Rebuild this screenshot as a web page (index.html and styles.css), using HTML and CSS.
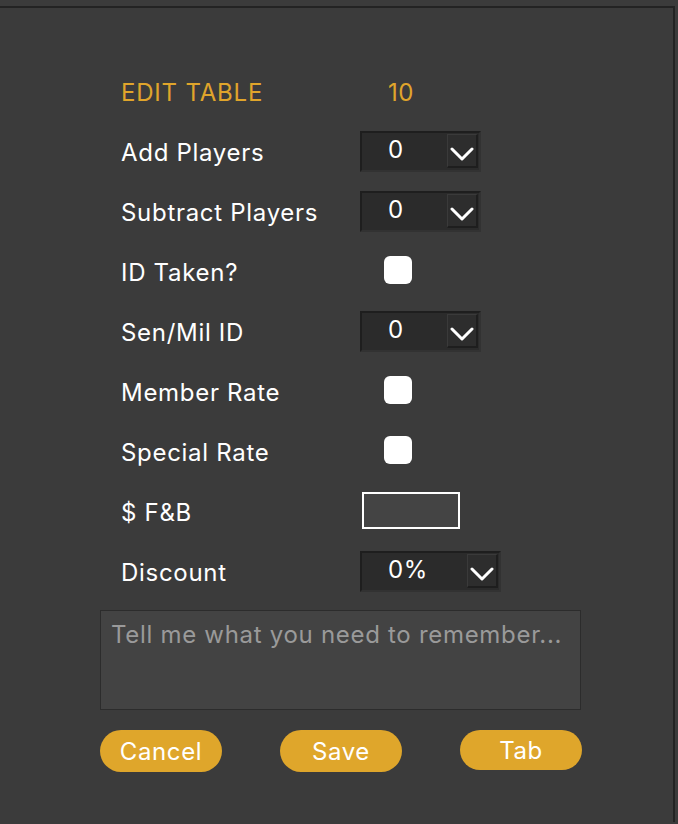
FILE: index.html
```html
<!DOCTYPE html>
<html>
<head>
<meta charset="utf-8">
<link rel="stylesheet" href="styles.css">
</head>
<body>
<div class="frame">
  <div class="form">
    <div class="row">
      <div class="title">EDIT TABLE</div>
      <div class="title num">10</div>
    </div>
    <div class="row">
      <div class="label">Add Players</div>
      <div class="select"><span class="val">0</span><span class="btn"><svg width="24" height="14" viewBox="0 0 24 14"><path d="M2 2 L12 12 L22 2" fill="none" stroke="#fff" stroke-width="3" stroke-linecap="round" stroke-linejoin="round"/></svg></span></div>
    </div>
    <div class="row">
      <div class="label">Subtract Players</div>
      <div class="select"><span class="val">0</span><span class="btn"><svg width="24" height="14" viewBox="0 0 24 14"><path d="M2 2 L12 12 L22 2" fill="none" stroke="#fff" stroke-width="3" stroke-linecap="round" stroke-linejoin="round"/></svg></span></div>
    </div>
    <div class="row">
      <div class="label">ID Taken?</div>
      <div class="check"></div>
    </div>
    <div class="row">
      <div class="label">Sen/Mil ID</div>
      <div class="select"><span class="val">0</span><span class="btn"><svg width="24" height="14" viewBox="0 0 24 14"><path d="M2 2 L12 12 L22 2" fill="none" stroke="#fff" stroke-width="3" stroke-linecap="round" stroke-linejoin="round"/></svg></span></div>
    </div>
    <div class="row">
      <div class="label">Member Rate</div>
      <div class="check"></div>
    </div>
    <div class="row">
      <div class="label">Special Rate</div>
      <div class="check"></div>
    </div>
    <div class="row">
      <div class="label">$ F&amp;B</div>
      <div class="input"></div>
    </div>
    <div class="row">
      <div class="label">Discount</div>
      <div class="select wide"><span class="val">0%</span><span class="btn"><svg width="24" height="14" viewBox="0 0 24 14"><path d="M2 2 L12 12 L22 2" fill="none" stroke="#fff" stroke-width="3" stroke-linecap="round" stroke-linejoin="round"/></svg></span></div>
    </div>
  </div>
  <div class="notes">Tell me what you need to remember...</div>
  <div class="actions">
    <div class="pill">Cancel</div>
    <div class="pill">Save</div>
    <div class="pill short">Tab</div>
  </div>
</div>
</body>
</html>
```

FILE: styles.css
```css
html, body {
  margin: 0;
  padding: 0;
  background: #3b3b3b;
  font-family: Inter, "Liberation Sans", sans-serif;
}
.frame {
  margin-top: 6px;
  width: 675px;
  height: 816px;
  box-sizing: border-box;
  border-top: 2px solid #232323;
  border-right: 2px solid #232323;
}
.form {
  padding: 54px 0 0 121px;
}
.row {
  display: grid;
  grid-template-columns: 239px auto;
  align-items: center;
  height: 60px;
}
.title {
  color: #e0a52b;
  font-size: 24px;
  letter-spacing: 0.8px;
}
.num {
  padding-left: 28px;
  letter-spacing: 0.6px;
}
.label {
  color: #fff;
  font-size: 24px;
  letter-spacing: 0.7px;
}
.select {
  width: 121px;
  height: 41px;
  box-sizing: border-box;
  background: #2b2b2b;
  border: 2px solid #1e1e1e;
  border-right-color: #323232;
  border-bottom-color: #323232;
  display: flex;
  align-items: center;
  justify-content: space-between;
  padding-right: 1px;
  margin-top: -2px;
}
.select.wide {
  width: 141px;
}
.val {
  color: #fff;
  font-size: 24px;
  letter-spacing: 0.5px;
  padding-left: 26px;
  margin-top: -4px;
}
.btn {
  width: 31px;
  height: 34px;
  box-sizing: border-box;
  background: #2d2d2d;
  border-top: 1px solid #3a3a3a;
  border-left: 1px solid #3a3a3a;
  border-right: 2px solid #1e1e1e;
  border-bottom: 2px solid #1e1e1e;
  display: flex;
  align-items: center;
  justify-content: center;
  padding-top: 6px;
}
.check {
  width: 28px;
  height: 28px;
  margin-left: 24px;
  margin-top: -4px;
  background: #fff;
  border-radius: 6px;
}
.input {
  width: 98px;
  height: 37px;
  box-sizing: border-box;
  margin-left: 2px;
  margin-top: -3px;
  background: #444;
  border: 2px solid #fff;
}
.notes {
  margin: 8px 0 0 100px;
  width: 481px;
  height: 100px;
  box-sizing: border-box;
  background: #434343;
  border: 1px solid #2c2c2c;
  color: #9a9a9a;
  font-size: 24px;
  letter-spacing: 0.7px;
  padding: 9px 0 0 10px;
}
.actions {
  display: flex;
  gap: 58px;
  margin: 20px 0 0 100px;
}
.pill {
  width: 122px;
  height: 42px;
  border-radius: 21px;
  background: #dfa62b;
  color: #fff;
  font-size: 24px;
  letter-spacing: 0.6px;
  display: flex;
  align-items: center;
  justify-content: center;
}
.pill.short {
  height: 40px;
  border-radius: 20px;
}
```
